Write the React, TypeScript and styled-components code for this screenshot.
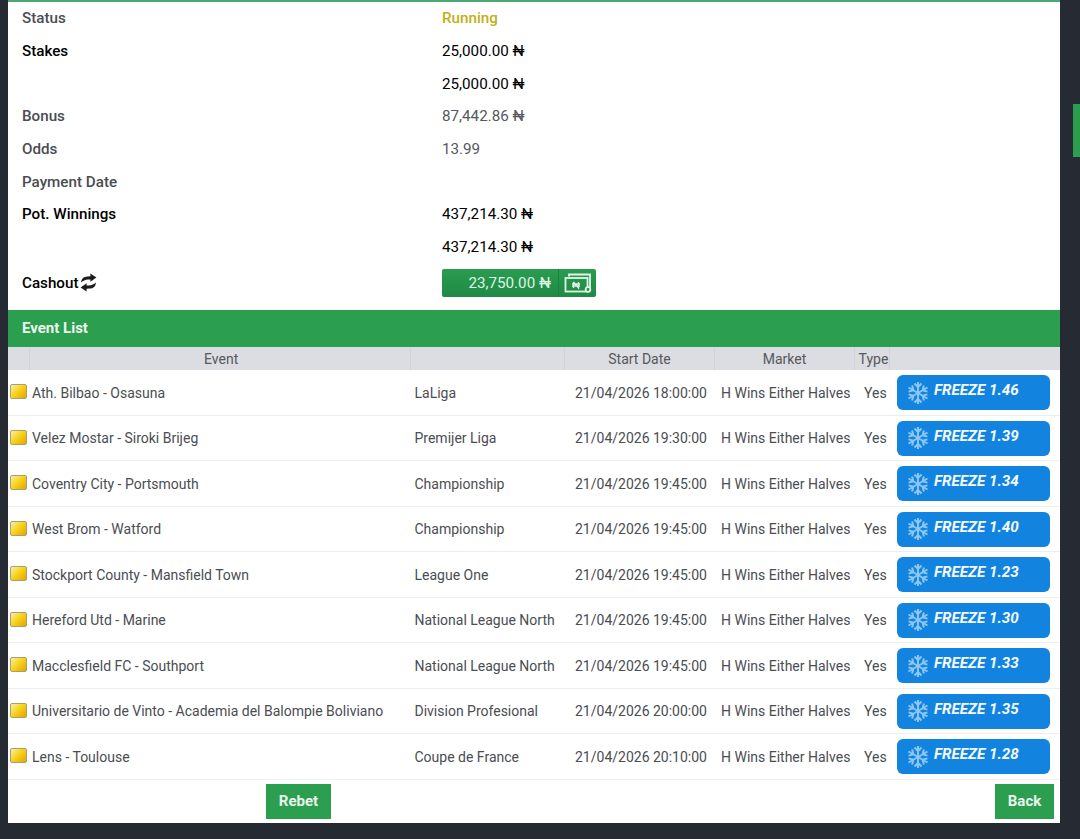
import React from 'react'
import styled, { createGlobalStyle } from 'styled-components'

const GlobalStyle = createGlobalStyle`
  html, body {
    margin: 0;
    padding: 0;
    background: #262b33;
    font-family: Roboto, "Liberation Sans", sans-serif;
    overflow: hidden;
  }
`

const summary = [
  { label: 'Status', value: 'Running', tone: 'status' },
  { label: 'Stakes', value: '25,000.00 ₦', tone: 'strong' },
  { label: '', value: '25,000.00 ₦', tone: 'strong' },
  { label: 'Bonus', value: '87,442.86 ₦', tone: 'muted' },
  { label: 'Odds', value: '13.99', tone: 'muted' },
  { label: 'Payment Date', value: '', tone: 'muted' },
  { label: 'Pot. Winnings', value: '437,214.30 ₦', tone: 'strong' },
  { label: '', value: '437,214.30 ₦', tone: 'strong' },
]

const events = [
  ['Ath. Bilbao - Osasuna', 'LaLiga', '21/04/2026 18:00:00', '1.46'],
  ['Velez Mostar - Siroki Brijeg', 'Premijer Liga', '21/04/2026 19:30:00', '1.39'],
  ['Coventry City - Portsmouth', 'Championship', '21/04/2026 19:45:00', '1.34'],
  ['West Brom - Watford', 'Championship', '21/04/2026 19:45:00', '1.40'],
  ['Stockport County - Mansfield Town', 'League One', '21/04/2026 19:45:00', '1.23'],
  ['Hereford Utd - Marine', 'National League North', '21/04/2026 19:45:00', '1.30'],
  ['Macclesfield FC - Southport', 'National League North', '21/04/2026 19:45:00', '1.33'],
  ['Universitario de Vinto - Academia del Balompie Boliviano', 'Division Profesional', '21/04/2026 20:00:00', '1.35'],
  ['Lens - Toulouse', 'Coupe de France', '21/04/2026 20:10:00', '1.28'],
]

const columns = '22px 381px 154px 150px 140px 35px 170px'

const Scrollbar = styled.div`
  position: fixed;
  top: 104px;
  right: 0;
  width: 7px;
  height: 53px;
  background: #2c9e4f;
`

const Panel = styled.main`
  width: 1052px;
  height: 823px;
  margin-left: 8px;
  background: #fff;
  border-top: 2px solid #4fa873;
  box-sizing: border-box;
  display: flex;
  flex-direction: column;
`

const Summary = styled.section`
  padding: 0 14px;
`

const SummaryRow = styled.div`
  display: grid;
  grid-template-columns: 420px 1fr;
  align-items: center;
  height: 32.7px;
  font-size: 15.2px;
`

const Label = styled.div<{ $tone: string }>`
  font-weight: 500;
  color: ${({ $tone }) => ($tone === 'strong' ? '#000' : '#4a4d52')};
`

const Value = styled.div<{ $tone: string }>`
  font-weight: ${({ $tone }) => ($tone === 'status' ? 500 : 400)};
  color: ${({ $tone }) =>
    $tone === 'status' ? '#c4ae16' : $tone === 'strong' ? '#000' : '#55585c'};
`

const CashoutRow = styled(SummaryRow)`
  height: 38px;
  margin-bottom: 8.4px;
`

const CashoutLabel = styled.div`
  display: flex;
  align-items: center;
  gap: 2px;
  font-weight: 500;
  color: #000;
`

const CashoutButton = styled.button`
  display: flex;
  align-items: stretch;
  width: 154px;
  height: 28px;
  padding: 0;
  border: 0;
  border-radius: 2px;
  background: linear-gradient(#2a9c50, #1f8a45);
  color: #dff3e5;
  font: 400 15.2px Roboto, sans-serif;
`

const CashoutAmount = styled.span`
  flex: 1;
  display: flex;
  align-items: center;
  justify-content: flex-end;
  padding-right: 7px;
  border-right: 1px solid #1f8040;
`

const CashoutIcon = styled.span`
  width: 37px;
  display: flex;
  align-items: center;
  justify-content: center;
`

const SectionBar = styled.h2`
  margin: 0;
  height: 37px;
  padding: 0 14px;
  display: flex;
  align-items: center;
  background: #2c9e4f;
  color: #eaf6ee;
  font-size: 15px;
  font-weight: 700;
`

const HeaderRow = styled.div`
  display: grid;
  grid-template-columns: ${columns};
  height: 23.5px;
  background: #dcdde2;
  color: #55585c;
  font-size: 14px;
`

const HeaderCell = styled.div<{ $inset?: number }>`
  display: flex;
  align-items: center;
  justify-content: center;
  padding-left: ${({ $inset }) => $inset ?? 0}px;
  border-right: 1px solid #d2d3d8;
`

const EventHeader = styled(HeaderCell)`
  justify-content: flex-start;
  padding-left: 174px;
`

const EventRow = styled.div`
  display: grid;
  grid-template-columns: ${columns};
  align-items: center;
  height: 45.5px;
  box-sizing: border-box;
  border-bottom: 1px solid #eeeef0;
  color: #4a4d52;
  font-size: 14px;
`

const FolderCell = styled.div`
  display: flex;
  justify-content: flex-end;
  padding-right: 3px;
  margin-top: -2px;
`

const Folder = styled.span`
  width: 17px;
  height: 15px;
  border-radius: 2px;
  background: linear-gradient(135deg, #f6eeb4 0%, #f9d41c 45%, #e3a603 100%);
  border: 1px solid #a9a070;
  box-sizing: border-box;
`

const Cell = styled.div<{ $inset: number }>`
  padding-left: ${({ $inset }) => $inset}px;
  white-space: nowrap;
`

const FreezeButton = styled.button`
  justify-self: start;
  margin-left: 7px;
  width: 153px;
  height: 35px;
  padding: 0 0 5px 10px;
  display: flex;
  align-items: center;
  gap: 5px;
  border: 0;
  border-radius: 6px;
  background: #1284e0;
  color: #f3f9fe;
  font: italic 700 15.2px Roboto, sans-serif;
`

const Footer = styled.div`
  display: flex;
  justify-content: space-between;
  padding: 4px 6px 0 258px;
`

const ActionButton = styled.button`
  height: 35px;
  padding: 0;
  border: 0;
  background: #2c9e4f;
  color: #e8f5ec;
  font: 700 15px Roboto, sans-serif;
`

const RebetButton = styled(ActionButton)`
  width: 65px;
`

const BackButton = styled(ActionButton)`
  width: 59px;
`

const SnowIcon = () => (
  <svg width="22" height="24" viewBox="0 0 22 24" fill="none" stroke="#8cc6f3" strokeWidth="2" style={{ marginTop: 5 }}>
    <path d="M11 1v22M7.5 2.5 11 6l3.5-3.5M7.5 21.5 11 18l3.5 3.5" />
    <path d="M1.5 6.5l19 11M1.6 10.6 6.4 9.3 5.1 4.5M20.4 13.4l-4.8 1.3 1.3 4.8" />
    <path d="M1.5 17.5l19-11M5.1 19.5l1.3-4.8-4.8-1.3M16.9 4.5l-1.3 4.8 4.8 1.3" />
  </svg>
)

const RefreshIcon = () => (
  <svg width="17" height="19" viewBox="0 0 17 19" fill="#1c1c1c">
    <path d="M1.2 9.6C1 6 3.6 3.6 7.4 3.4L10.4 3.3V.6L16.4 4.6 10.4 8.8V6.4L8 6.6C5.2 6.8 3 7.8 1.2 9.6Z" />
    <path d="M15.8 9.4C16 13 13.4 15.4 9.6 15.6L6.6 15.7v2.7L.6 14.4 6.6 10.2v2.4L9 12.4c2.8-.2 5-1.2 6.8-3Z" />
  </svg>
)

const CashIcon = () => (
  <svg width="28" height="20" viewBox="0 0 28 20" fill="none" stroke="#e3f4e8" strokeWidth="1.8">
    <path d="M5 3.5V1.5h21v13h-2" />
    <rect x="1.5" y="5" width="22" height="13.5" />
    <path d="M9.5 15V9m0 0 5 6V9M8 11h8M8 13h8" strokeWidth="1.3" />
    <circle cx="24" cy="16.5" r="2.3" fill="#1f8a45" />
  </svg>
)

const App = () => {
  return (
    <>
      <GlobalStyle />
      <Scrollbar />
      <Panel>
        <Summary>
          {summary.map((row, i) => (
            <SummaryRow key={i}>
              <Label $tone={row.tone}>{row.label}</Label>
              <Value $tone={row.tone}>{row.value}</Value>
            </SummaryRow>
          ))}
          <CashoutRow>
            <CashoutLabel>
              Cashout <RefreshIcon />
            </CashoutLabel>
            <CashoutButton>
              <CashoutAmount>23,750.00 ₦</CashoutAmount>
              <CashoutIcon>
                <CashIcon />
              </CashoutIcon>
            </CashoutButton>
          </CashoutRow>
        </Summary>

        <SectionBar>Event List</SectionBar>
        <HeaderRow>
          <HeaderCell />
          <EventHeader>Event</EventHeader>
          <HeaderCell />
          <HeaderCell>Start Date</HeaderCell>
          <HeaderCell>Market</HeaderCell>
          <HeaderCell $inset={3}>Type</HeaderCell>
          <div />
        </HeaderRow>

        {events.map(([name, league, date, odds]) => (
          <EventRow key={name}>
            <FolderCell>
              <Folder />
            </FolderCell>
            <Cell $inset={2}>{name}</Cell>
            <Cell $inset={3.5}>{league}</Cell>
            <Cell $inset={10}>{date}</Cell>
            <Cell $inset={6}>H Wins Either Halves</Cell>
            <Cell $inset={9}>Yes</Cell>
            <FreezeButton>
              <SnowIcon />
              FREEZE {odds}
            </FreezeButton>
          </EventRow>
        ))}

        <Footer>
          <RebetButton>Rebet</RebetButton>
          <BackButton>Back</BackButton>
        </Footer>
      </Panel>
    </>
  )
}

export default App
